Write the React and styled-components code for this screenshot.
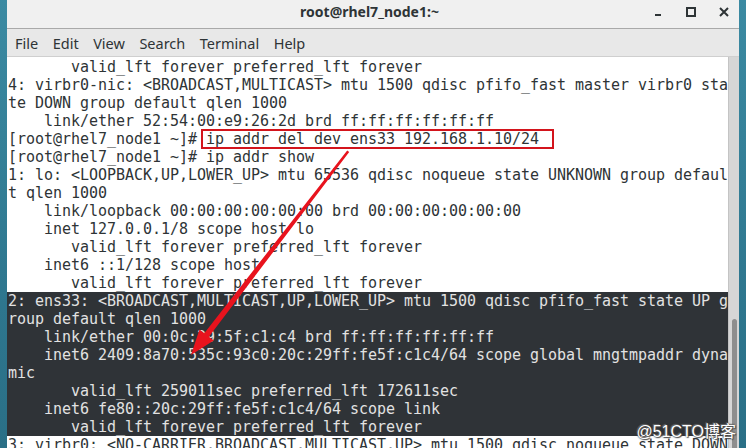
import React from 'react'
import styled, { createGlobalStyle } from 'styled-components'

const GlobalStyle = createGlobalStyle`
    html, body {
        margin: 0;
        padding: 0;
        height: 100%;
        overflow: hidden;
    }
    #root {
        height: 100%;
    }
`

const before = [
    '       valid_lft forever preferred_lft forever',
    '4: virbr0-nic: <BROADCAST,MULTICAST> mtu 1500 qdisc pfifo_fast master virbr0 sta',
    'te DOWN group default qlen 1000',
    '    link/ether 52:54:00:e9:26:2d brd ff:ff:ff:ff:ff:ff',
]

const middle = [
    '[root@rhel7_node1 ~]# ip addr show',
    '1: lo: <LOOPBACK,UP,LOWER_UP> mtu 65536 qdisc noqueue state UNKNOWN group defaul',
    't qlen 1000',
    '    link/loopback 00:00:00:00:00:00 brd 00:00:00:00:00:00',
    '    inet 127.0.0.1/8 scope host lo',
    '       valid_lft forever preferred_lft forever',
    '    inet6 ::1/128 scope host ',
    '       valid_lft forever preferred_lft forever',
]

const selected = [
    '2: ens33: <BROADCAST,MULTICAST,UP,LOWER_UP> mtu 1500 qdisc pfifo_fast state UP g',
    'roup default qlen 1000',
    '    link/ether 00:0c:29:5f:c1:c4 brd ff:ff:ff:ff:ff:ff',
    '    inet6 2409:8a70:535c:93c0:20c:29ff:fe5f:c1c4/64 scope global mngtmpaddr dyna',
    'mic ',
    '       valid_lft 259011sec preferred_lft 172611sec',
    '    inet6 fe80::20c:29ff:fe5f:c1c4/64 scope link ',
    '       valid_lft forever preferred_lft forever',
]

const after = [
    '3: virbr0: <NO-CARRIER,BROADCAST,MULTICAST,UP> mtu 1500 qdisc noqueue state DOWN',
]

const menus = ['File', 'Edit', 'View', 'Search', 'Terminal', 'Help']

const App = () => {
    return (
        <>
            <GlobalStyle />
            <Desktop>
                <Window>
                    <TitleBar>
                        <Side />
                        <Title>root@rhel7_node1:~</Title>
                        <Side $end>
                            <CtrlButton aria-label="minimize">
                                <svg width="12" height="12" viewBox="0 0 12 12">
                                    <rect x="3" y="8" width="6" height="2" fill="#2e3436" />
                                </svg>
                            </CtrlButton>
                            <CtrlButton aria-label="maximize">
                                <svg width="12" height="12" viewBox="0 0 12 12">
                                    <rect x="2" y="2" width="8" height="8" fill="none" stroke="#2e3436" strokeWidth="2" />
                                </svg>
                            </CtrlButton>
                            <CtrlButton aria-label="close">
                                <svg width="12" height="12" viewBox="0 0 12 12">
                                    <path d="M2 2 L10 10 M10 2 L2 10" stroke="#2e3436" strokeWidth="2" />
                                </svg>
                            </CtrlButton>
                        </Side>
                    </TitleBar>
                    <MenuBar>
                        {menus.map((m) => (
                            <MenuItem key={m}>{m}</MenuItem>
                        ))}
                    </MenuBar>
                    <TermArea>
                        <Screen>
                            {before.map((l, i) => (
                                <Row key={'b' + i}>{l}</Row>
                            ))}
                            <Row>
                                {'[root@rhel7_node1 ~]# '}
                                <Boxed>ip addr del dev ens33 192.168.1.10/24</Boxed>
                            </Row>
                            {middle.map((l, i) => (
                                <Row key={'m' + i}>{l}</Row>
                            ))}
                            {selected.map((l, i) => (
                                <Row key={'s' + i} $selected>{l}</Row>
                            ))}
                            {after.map((l, i) => (
                                <Row key={'a' + i}>{l}</Row>
                            ))}
                            <Arrow width="721" height="390" viewBox="0 0 721 390">
                                <polygon
                                    points="340.2,93.4 342.2,94.9 201.9,279.8 206.7,283.5 184,298 192.5,272.5 197.3,276.2"
                                    fill="#e8131d"
                                />
                            </Arrow>
                        </Screen>
                        <ScrollBar>
                            <Thumb />
                        </ScrollBar>
                        <Watermark>@51CTO博客</Watermark>
                    </TermArea>
                </Window>
            </Desktop>
        </>
    )
}

export default App

const Desktop = styled.div`
    height: 100vh;
    width: 100vw;
    display: flex;
    padding: 0 7px;
    box-sizing: border-box;
    background: linear-gradient(180deg, #3b8aa2 0%, #2f7890 60%, #2a6f86 100%);
`

const Window = styled.div`
    flex: 1;
    display: flex;
    flex-direction: column;
    min-width: 0;
    overflow: hidden;
    background: #ffffff;
`

const TitleBar = styled.div`
    height: 29px;
    flex-shrink: 0;
    display: flex;
    align-items: center;
    padding-bottom: 5px;
    box-sizing: border-box;
    background: #f0f0f0;
    border-bottom: 1px solid #a9a9a9;
    font-family: "Noto Sans", "DejaVu Sans", sans-serif;
`

const Side = styled.div`
    flex: 1;
    display: flex;
    justify-content: ${(p) => (p.$end ? 'flex-end' : 'flex-start')};
    gap: 17px;
    padding-right: ${(p) => (p.$end ? '7px' : '0')};
`

const Title = styled.div`
    font-size: 14px;
    font-weight: 700;
    color: #2e3436;
`

const CtrlButton = styled.div`
    width: 16px;
    height: 16px;
    display: flex;
    align-items: center;
    justify-content: center;
`

const MenuBar = styled.div`
    height: 27px;
    flex-shrink: 0;
    display: flex;
    align-items: center;
    gap: 14.5px;
    padding-left: 8px;
    background: #e8e8e8;
    border-bottom: 1px solid #cfcfcf;
    font-family: "Noto Sans", "DejaVu Sans", sans-serif;
    font-size: 14.5px;
    color: #2e3436;
`

const MenuItem = styled.span`
    padding-top: 1px;
`

const TermArea = styled.div`
    position: relative;
    flex: 1;
    display: flex;
    min-height: 0;
`

const Screen = styled.div`
    position: relative;
    flex: 1;
    min-width: 0;
    overflow: hidden;
    padding-top: 1px;
    background: #ffffff;
    font-family: "DejaVu Sans Mono", "Liberation Mono", monospace;
    font-size: 15px;
    letter-spacing: -0.03px;
`

const Row = styled.div`
    height: 18px;
    line-height: 18px;
    white-space: pre;
    padding-left: 1px;
    color: ${(p) => (p.$selected ? '#e2e2e2' : '#2e3436')};
    background: ${(p) => (p.$selected ? '#2f3337' : 'transparent')};
`

const Boxed = styled.span`
    position: relative;
    &::after {
        content: '';
        position: absolute;
        left: -5px;
        right: -15px;
        top: -1px;
        bottom: -1px;
        border: 2px solid #d3141c;
    }
`

const Arrow = styled.svg`
    position: absolute;
    left: 0;
    top: 0;
    pointer-events: none;
`

const Watermark = styled.div`
    position: absolute;
    right: 3px;
    bottom: 6px;
    white-space: nowrap;
    font-family: "Liberation Sans", "Noto Sans CJK SC", sans-serif;
    font-size: 16px;
    color: #ffffff;
    text-shadow: 1px 1px 1px #4a4a4a, -1px -1px 1px #6a6a6a, 0 0 2px #333333;
`

const ScrollBar = styled.div`
    width: 11px;
    flex-shrink: 0;
    background: #d6d6d6;
    border-left: 1px solid #c4c4c4;
    padding-top: 262px;
    box-sizing: border-box;
    display: flex;
    justify-content: flex-end;
`

const Thumb = styled.div`
    width: 5px;
    height: 140px;
    margin-right: 2px;
    border-radius: 3px;
    background: #8e8e8e;
`
